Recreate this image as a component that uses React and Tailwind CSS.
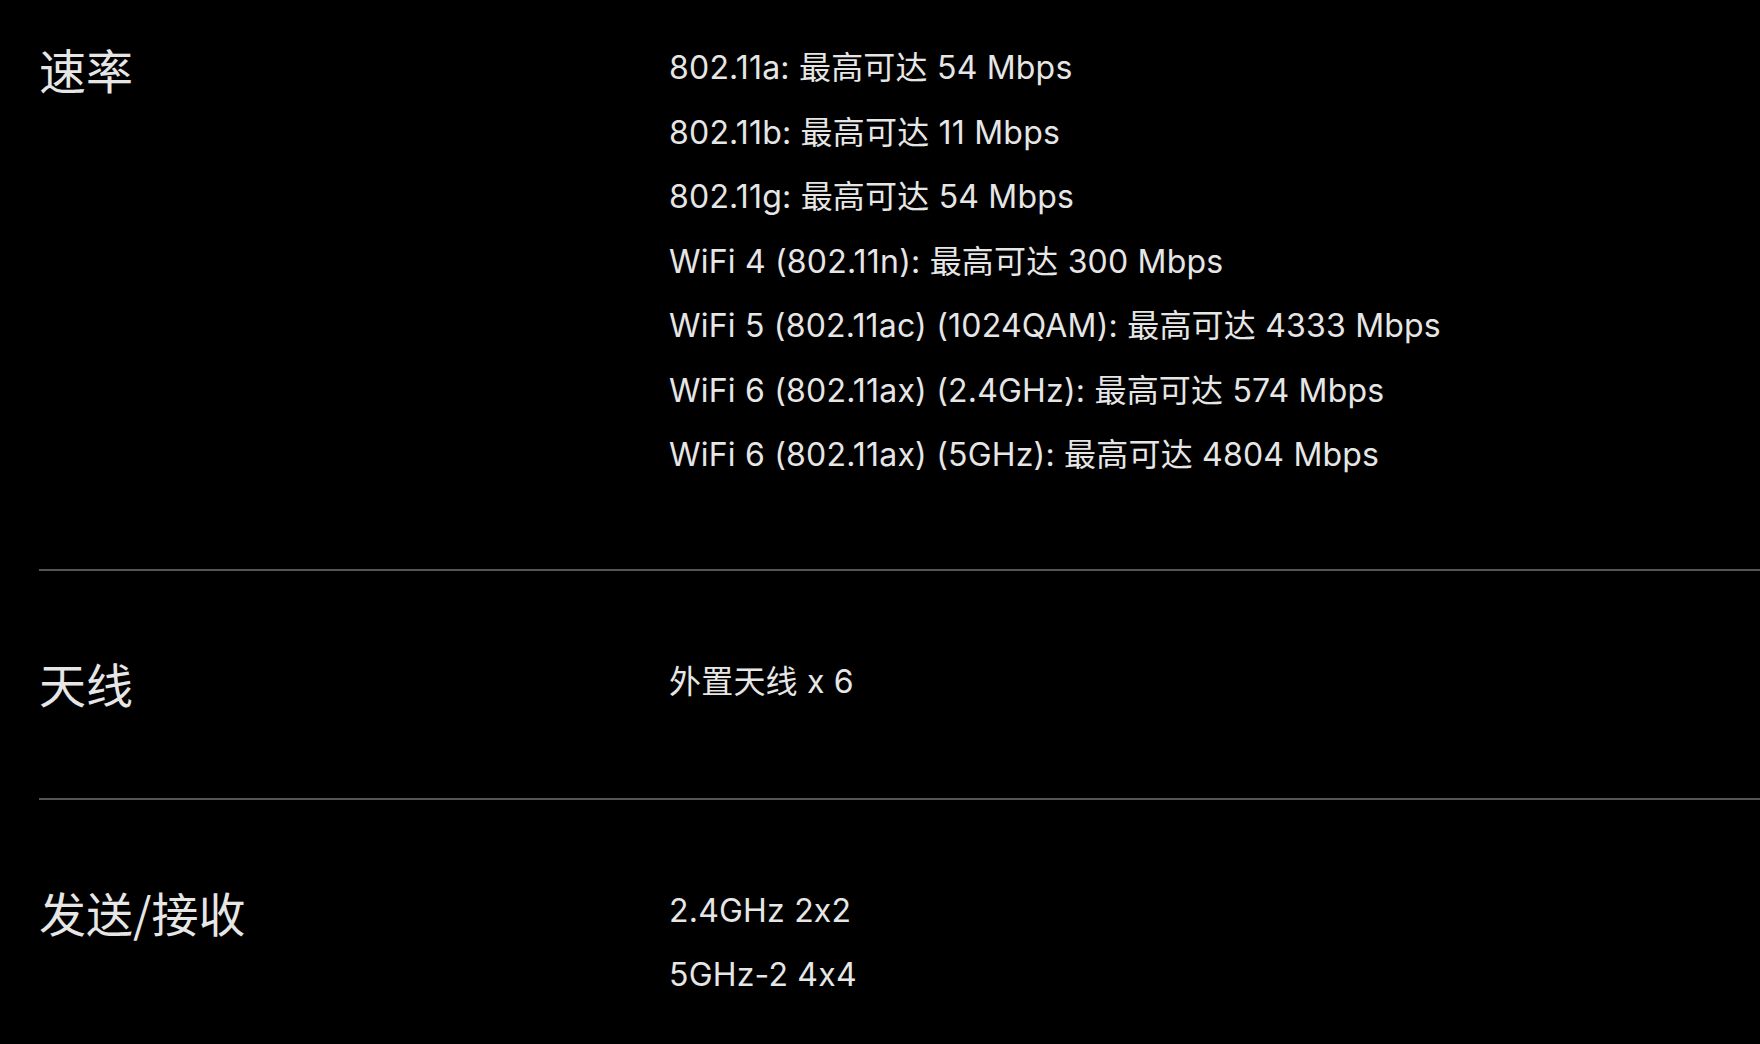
import React from "react";

const rows = [
  {
    label: "速率",
    values: [
      "802.11a: 最高可达 54 Mbps",
      "802.11b: 最高可达 11 Mbps",
      "802.11g: 最高可达 54 Mbps",
      "WiFi 4 (802.11n): 最高可达 300 Mbps",
      "WiFi 5 (802.11ac) (1024QAM): 最高可达 4333 Mbps",
      "WiFi 6 (802.11ax) (2.4GHz): 最高可达 574 Mbps",
      "WiFi 6 (802.11ax) (5GHz): 最高可达 4804 Mbps",
    ],
  },
  { label: "天线", values: ["外置天线 x 6"] },
  { label: "发送/接收", values: ["2.4GHz 2x2", "5GHz-2 4x4"] },
];

const font = { fontFamily: "Inter, 'Noto Sans CJK SC', sans-serif" };

export default function App() {
  return (
    <div
      className="w-[1760px] h-[1044px] overflow-hidden bg-black text-[#e6e6e6] pl-[39px]"
      style={font}
    >
      {rows.map((row, i) => (
        <div key={row.label}>
          {i > 0 && <div className="h-[2px] bg-[#555555]" />}
          <div
            className={
              "flex " +
              (i === 0
                ? "pt-[36px] pb-[81px]"
                : i === 1
                ? "pt-[79px] pb-[82px]"
                : "pt-[79px] pb-[82px]")
            }
          >
            <div className="w-[630px] shrink-0 text-[47px] leading-[66px] font-['Noto_Sans_CJK_SC',sans-serif]">
              {row.label}
            </div>
            <div className="flex flex-col text-[32px] leading-[64.5px] tracking-[0.2px]">
              {row.values.map((v) => (
                <div key={v} className="whitespace-nowrap">
                  {v}
                </div>
              ))}
            </div>
          </div>
        </div>
      ))}
    </div>
  );
}
